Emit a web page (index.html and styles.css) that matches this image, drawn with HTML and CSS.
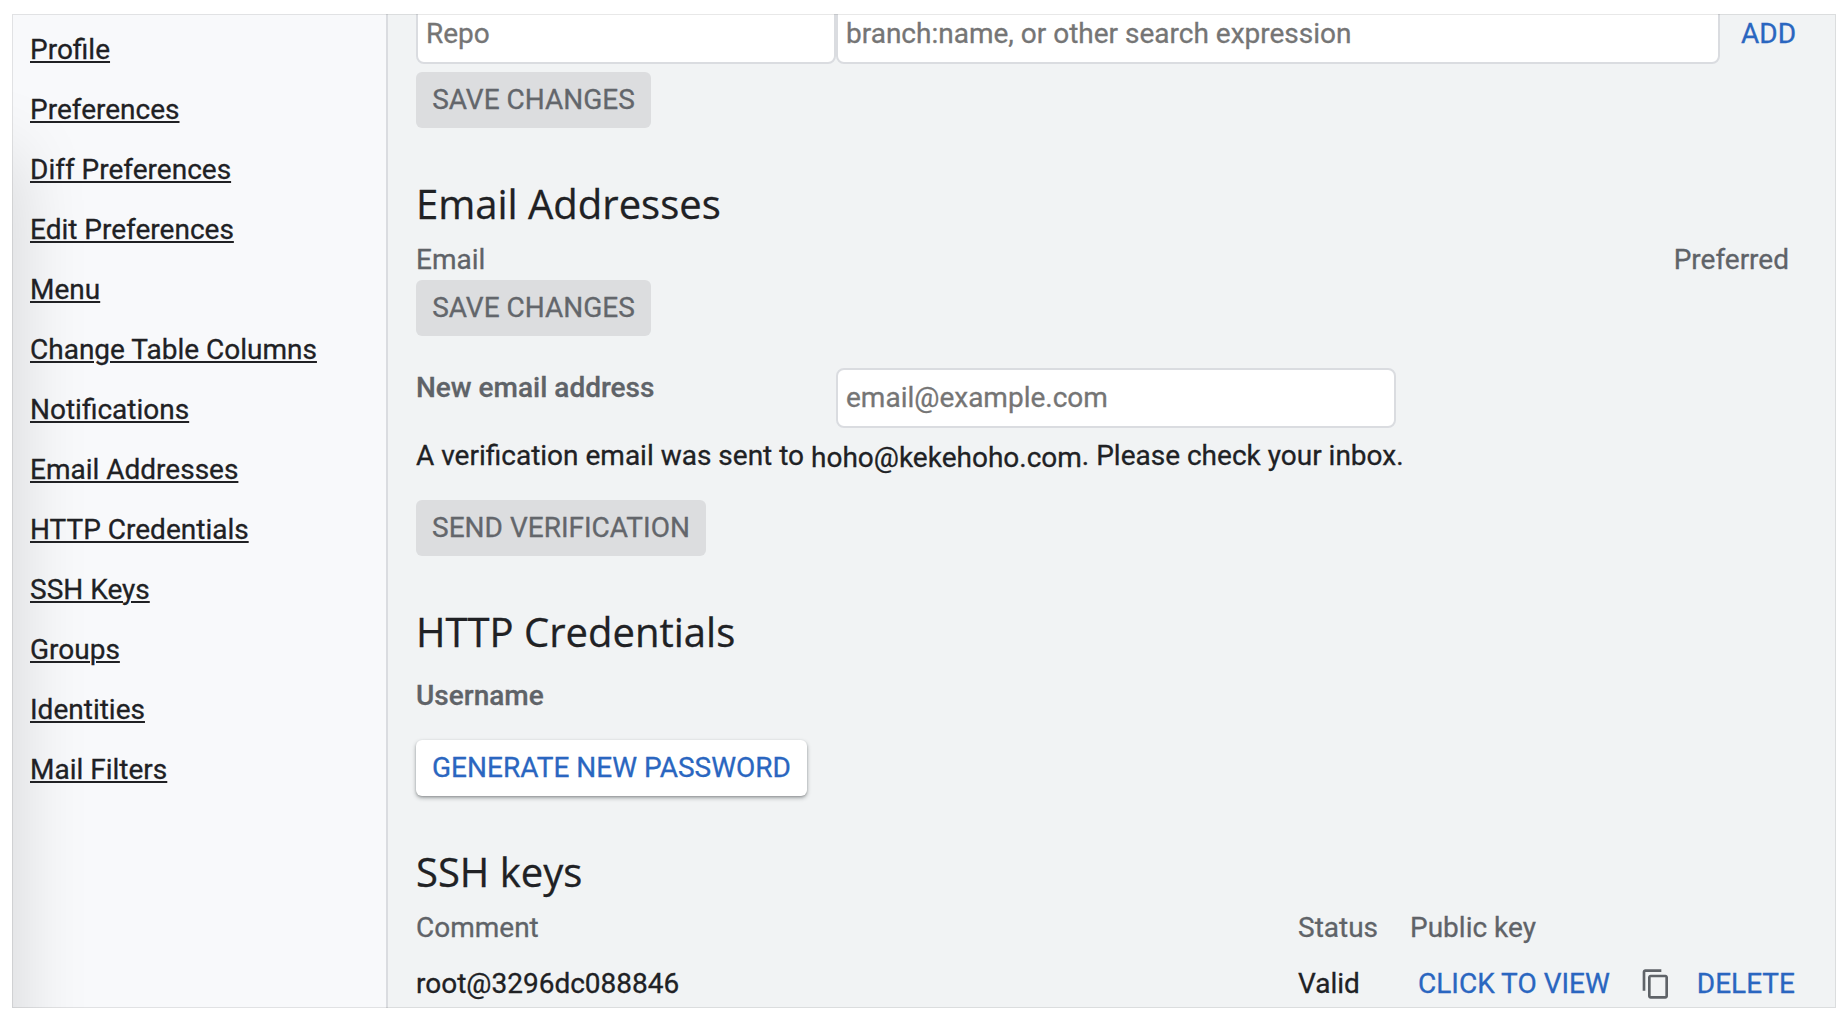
FILE: index.html
```html
<!DOCTYPE html>
<html lang="en">
<head>
<meta charset="utf-8">
<title>Settings</title>
<link rel="stylesheet" href="styles.css">
</head>
<body>
<div class="app">
  <nav class="sidebar">
    <a class="nav-link">Profile</a>
    <a class="nav-link">Preferences</a>
    <a class="nav-link">Diff Preferences</a>
    <a class="nav-link">Edit Preferences</a>
    <a class="nav-link">Menu</a>
    <a class="nav-link">Change Table Columns</a>
    <a class="nav-link">Notifications</a>
    <a class="nav-link">Email Addresses</a>
    <a class="nav-link">HTTP Credentials</a>
    <a class="nav-link">SSH Keys</a>
    <a class="nav-link">Groups</a>
    <a class="nav-link">Identities</a>
    <a class="nav-link">Mail Filters</a>
  </nav>
  <main class="content">
    <section class="section">
      <div class="watch-row">
        <input class="field field-repo" placeholder="Repo">
        <input class="field field-query" placeholder="branch:name, or other search expression">
        <a class="link add">ADD</a>
      </div>
      <button class="button save" disabled>SAVE CHANGES</button>
    </section>
    <section class="section">
      <h2 class="title">Email Addresses</h2>
      <div class="email-head"><span>Email</span><span>Preferred</span></div>
      <button class="button save" disabled>SAVE CHANGES</button>
      <div class="form-row">
        <label class="label">New email address</label>
        <input class="field field-email" placeholder="email@example.com">
      </div>
      <p class="message">A verification email was sent to <span class="address">hoho@kekehoho.com</span>. Please check your inbox.</p>
      <button class="button send" disabled>SEND VERIFICATION</button>
    </section>
    <section class="section">
      <h2 class="title">HTTP Credentials</h2>
      <div class="label username">Username</div>
      <button class="button primary">GENERATE NEW PASSWORD</button>
    </section>
    <section class="section">
      <h2 class="title">SSH keys</h2>
      <div class="keys keys-head"><span>Comment</span><span>Status</span><span>Public key</span></div>
      <div class="keys keys-row">
        <span>root@3296dc088846</span><span>Valid</span>
        <a class="link view">CLICK TO VIEW</a>
        <svg class="copy" viewBox="0 0 24 24"><path d="M16 1H4c-1.1 0-2 .9-2 2v14h2V3h12V1zm3 4H8c-1.1 0-2 .9-2 2v14c0 1.1.9 2 2 2h11c1.1 0 2-.9 2-2V7c0-1.1-.9-2-2-2zm0 16H8V7h11v14z"/></svg>
        <a class="link delete">DELETE</a>
      </div>
    </section>
  </main>
</div>
</body>
</html>
```
FILE: styles.css
```css
* { box-sizing: border-box; }

body {
  margin: 0;
  padding: 14px 8px 0 12px;
  height: 1014px;
  overflow: hidden;
  background: #fff;
  color: #202124;
  font: 400 28px/40px Roboto, sans-serif;
  -webkit-text-stroke: 0.3px;
}

.app {
  position: relative;
  display: flex;
  width: 1824px;
  height: 994px;
  overflow: hidden;
  background: #f1f3f4;
}

/* hairline frame over both panes */
.app::after {
  content: "";
  position: absolute;
  inset: 0;
  border: 1px solid rgba(0, 0, 0, 0.09);
  pointer-events: none;
}

.sidebar {
  position: relative;
  display: flex;
  flex: none;
  flex-direction: column;
  align-items: flex-start;
  gap: 20px;
  width: 376px;
  padding: 16px 0 0 18px;
  border-right: 2px solid #dadce0;
  background: #f8f9fb;
}

/* soft shade along the left edge */
.sidebar::before {
  content: "";
  position: absolute;
  left: -60px;
  top: 140px;
  width: 60px;
  height: 1000px;
  box-shadow: 0 0 74px rgba(0, 0, 0, 0.17);
}

.nav-link {
  position: relative;
  text-decoration: underline;
  text-decoration-thickness: 2px;
  text-underline-offset: 2px;
}

.content {
  flex: 1;
  min-width: 0;
  padding: 0 41px 0 28px;
}

.section + .section { margin-top: 48px; }

.watch-row {
  display: flex;
  height: 50px;
  margin-bottom: 8px;
  align-items: flex-end;
}

.field {
  flex: none;
  height: 60px;
  padding: 0 8px 2px;
  border: 2px solid #dadce0;
  border-radius: 8px;
  background: #fff;
  font: inherit;
}

.field::placeholder { color: #757575; opacity: 1; }
.field-repo { width: 420px; }
.field-query { width: 884px; }
.field-email { width: 560px; }

.link { color: #2a66c0; }
.add { margin: 0 0 10px 21px; }

.button {
  display: block;
  height: 56px;
  padding: 0;
  border: 0;
  border-radius: 6px;
  background: #dcdddf;
  color: #63666b;
  font: inherit;
  text-align: center;
}

.save { width: 235px; }
.send { width: 290px; }

.primary {
  width: 391px;
  margin-top: 24px;
  background: #fff;
  color: #2a66c0;
  box-shadow: 0 2px 4px rgba(60, 64, 67, 0.4), 0 1px 2px rgba(60, 64, 67, 0.25);
}

.title {
  margin: 0 0 8px;
  font: 400 40px/56px "Open Sans", sans-serif;
}

.email-head {
  display: flex;
  justify-content: space-between;
  padding-right: 6px;
  color: #5f6368;
}

.form-row {
  display: flex;
  align-items: flex-start;
  margin-top: 32px;
}

.label {
  width: 420px;
  color: #5f6368;
  font-weight: 500;
}

.message { margin: 8px 0 24px; }
.address { position: relative; top: 2px; }
.username { padding-top: 8px; height: 48px; }

.keys {
  display: grid;
  grid-template-columns: 882px 112px 1fr;
}

.keys-head { color: #5f6368; }

.keys-row {
  grid-template-columns: 882px 120px 222px 1fr auto;
  margin-top: 16px;
}

.copy {
  width: 32px;
  height: 32px;
  margin-top: 4px;
  fill: #5f6368;
}
```
